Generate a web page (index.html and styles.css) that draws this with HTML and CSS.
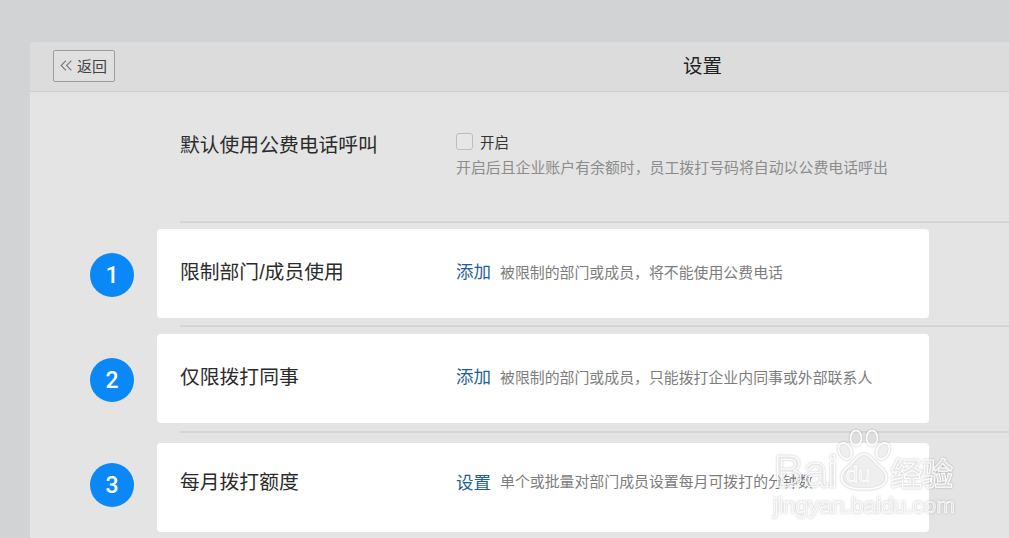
FILE: index.html
```html
<!DOCTYPE html>
<html lang="zh">
<head>
<meta charset="utf-8">
<title>设置</title>
<link rel="stylesheet" href="styles.css">
</head>
<body>
<main class="panel">
  <header class="topbar">
    <button class="back"><svg class="back-icon" viewBox="0 0 12 10"><path d="M5.5 .5 1 5l4.500 4.500M10.500 .5 6 5l4.500 4.500"/></svg>返回</button>
    <h1 class="title">设置</h1>
  </header>
  <section class="setting">
    <div class="label">默认使用公费电话呼叫</div>
    <div class="setting-body">
      <label class="check"><span class="box"></span>开启</label>
      <p class="hint">开启后且企业账户有余额时，员工拨打号码将自动以公费电话呼出</p>
    </div>
  </section>
  <div class="rule rule-a"></div>
  <div class="row row-a">
    <span class="badge">1</span>
    <div class="card">
      <div class="label">限制部门/成员使用</div>
      <a class="action">添加</a>
      <span class="desc">被限制的部门或成员，将不能使用公费电话</span>
    </div>
  </div>
  <div class="rule rule-b"></div>
  <div class="row row-b">
    <span class="badge">2</span>
    <div class="card">
      <div class="label">仅限拨打同事</div>
      <a class="action">添加</a>
      <span class="desc">被限制的部门或成员，只能拨打企业内同事或外部联系人</span>
    </div>
  </div>
  <div class="rule rule-c"></div>
  <div class="row row-c">
    <span class="badge">3</span>
    <div class="card">
      <div class="label">每月拨打额度</div>
      <a class="action">设置</a>
      <span class="desc">单个或批量对部门成员设置每月可拨打的分钟数</span>
    </div>
  </div>
</main>
<div class="watermark">
  <svg class="paw" viewBox="0 0 54 62">
    <ellipse cx="8" cy="21" rx="6" ry="8.5" transform="rotate(-25 8 21)"/>
    <ellipse cx="19" cy="8" rx="5.5" ry="7.5"/>
    <ellipse cx="35" cy="8" rx="5.5" ry="7.5"/>
    <ellipse cx="46" cy="21" rx="6" ry="8.5" transform="rotate(25 46 21)"/>
    <path d="M27 24c-7 0-9 7-14 11-6 5-10 9-8 15 2 7 11 9 22 9s20-2 22-9c2-6-2-10-8-15-5-4-7-11-14-11z"/>
  </svg>
  <span class="wm-bai">Bai</span>
  <span class="wm-du">du</span>
  <span class="wm-cn">经验</span>
  <span class="wm-url">jingyan.baidu.com</span>
</div>
</body>
</html>
```
FILE: styles.css
```css
* { box-sizing: border-box; }
html, body { height: 100%; }
body {
  margin: 0;
  height: 538px;
  overflow: hidden;
  padding: 42px 0 0 30px;
  background: #d2d3d5;
  font-family: "Liberation Sans", "Noto Sans CJK SC", sans-serif;
  color: #2b2b2b;
  position: relative;
  filter: blur(.35px);
}
.panel {
  width: 1000px;
  height: 520px;
  background: #e4e4e4;
  border-radius: 4px 0 0 0;
}
.topbar {
  height: 50px;
  display: flex;
  align-items: center;
  padding: 0 0 2px 23px;
  background: #dcdcdc;
  border-bottom: 1px solid #cfcfd1;
  border-radius: 4px 0 0 0;
}
.back {
  width: 62px;
  height: 32px;
  display: flex;
  align-items: center;
  padding: 0 0 0 6px;
  gap: 4px;
  background: #e0e0e0;
  border: 1px solid #9c9c9c;
  border-radius: 2px;
  font: 15px "Noto Sans CJK SC", sans-serif;
  color: #444;
}
.back-icon {
  width: 13px;
  height: 11px;
  fill: none;
  stroke: #777;
  stroke-width: 1;
}
.title {
  margin: 0 0 0 568px;
  font-size: 19.5px;
  line-height: 26px;
  font-weight: 400;
  color: #222;
}
.setting {
  height: 129px;
  padding: 39px 0 0 150px;
  display: flex;
}
.label {
  width: 276px;
  flex: none;
  font-size: 19.8px;
  line-height: 26px;
  color: #2b2b2b;
}
.setting .label { padding-top: 1px; }
.check {
  display: flex;
  align-items: center;
  gap: 7px;
  height: 20px;
  font-size: 14.5px;
  color: #333;
}
.box {
  width: 17px;
  height: 17px;
  background: #e6e6e6;
  border: 1px solid #bdbdbd;
  border-radius: 3px;
}
.hint {
  margin: 7px 0 0;
  font-size: 14.9px;
  line-height: 20px;
  color: #8c8c8c;
}
.rule {
  height: 2px;
  margin-left: 150px;
  background: #d3d6d8;
}
.row {
  display: flex;
  align-items: flex-start;
  gap: 23px;
  padding-left: 60px;
}
.row-a { margin-top: 6px; }
.row-b { margin-top: 7px; }
.row-c { margin-top: 10px; }
.rule-b { margin-top: 7px; }
.rule-c { margin-top: 8px; }
.badge {
  width: 44px;
  height: 44px;
  margin-top: 24px;
  flex: none;
  display: flex;
  align-items: center;
  justify-content: center;
  border-radius: 50%;
  background: #0a88f7;
  color: #fff;
  font: 500 23px/1 Roboto, sans-serif;
}
.row-c .badge { margin-top: 20px; }
.card {
  width: 772px;
  height: 89px;
  display: flex;
  align-items: center;
  padding: 0 0 3px 23px;
  background: #fff;
  border-radius: 4px;
}
.row-c .card { padding-bottom: 12px; }
.action {
  font-size: 17.5px;
  color: #1f5f96;
  margin: 0 9px 3px 0;
}
.row-c .action { margin-bottom: 0; }
.desc {
  font-size: 14.9px;
  color: #7d7d7d;
  margin-bottom: 2px;
}
.watermark {
  position: absolute;
  left: 0;
  top: 0;
  width: 1009px;
  height: 538px;
  pointer-events: none;
  filter: drop-shadow(0 0 1px rgba(0,0,0,.28));
}
.paw {
  position: absolute;
  left: 837px;
  top: 430px;
  width: 54px;
  height: 62px;
  fill: rgba(255,255,255,.35);
  stroke: #fff;
  stroke-width: 1.6;
}
.wm-bai, .wm-du, .wm-cn, .wm-url {
  position: absolute;
  white-space: nowrap;
  color: rgba(255,255,255,.45);
  -webkit-text-stroke: 1px #fff;
}
.wm-bai {
  left: 774px;
  top: 452px;
  font: 44px/40px "Liberation Sans", sans-serif;
}
.wm-du {
  left: 846px;
  top: 462px;
  font: 22px/26px "Liberation Sans", sans-serif;
  -webkit-text-stroke: .8px #fff;
}
.wm-cn {
  left: 891px;
  top: 450px;
  font: 700 31px/44px "Noto Sans CJK SC", sans-serif;
}
.wm-url {
  left: 773px;
  top: 493px;
  font: 22.6px/26px "Liberation Sans", sans-serif;
  -webkit-text-stroke: .7px #fff;
}
```
